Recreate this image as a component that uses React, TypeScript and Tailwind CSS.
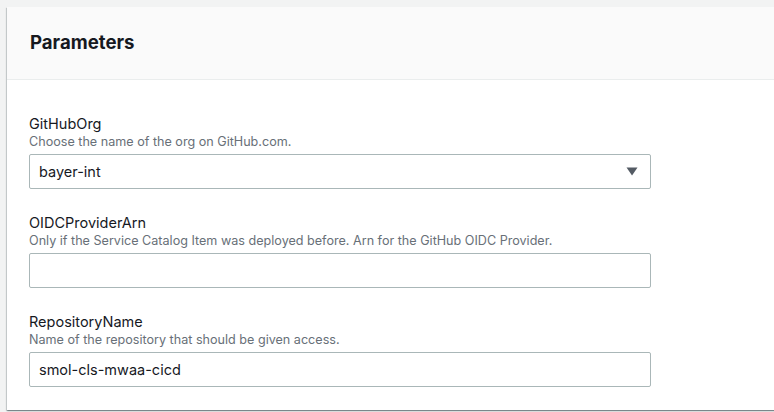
import { useState } from 'react'

type Field = {
  name: string
  description: string
  value: string
  kind: 'select' | 'text'
}

const fields: Field[] = [
  {
    name: 'GitHubOrg',
    description: 'Choose the name of the org on GitHub.com.',
    value: 'bayer-int',
    kind: 'select',
  },
  {
    name: 'OIDCProviderArn',
    description: 'Only if the Service Catalog Item was deployed before. Arn for the GitHub OIDC Provider.',
    value: '',
    kind: 'text',
  },
  {
    name: 'RepositoryName',
    description: 'Name of the repository that should be given access.',
    value: 'smol-cls-mwaa-cicd',
    kind: 'text',
  },
]

function Caret() {
  return (
    <svg width="12" height="9" viewBox="0 0 12 9" className="absolute right-[13px] top-[13px]">
      <path d="M0.5 0.5h11L6 8.5z" fill="#545b64" />
    </svg>
  )
}

function ParamField({ field }: { field: Field }) {
  const [value, setValue] = useState(field.value)

  return (
    <div className="flex flex-col">
      <label className="text-[14.5px] leading-[20px] text-[#16191f]">{field.name}</label>
      <p className="text-[12.6px] leading-[16px] text-[#687078] mb-[4px]">{field.description}</p>
      <div className="relative w-[622px]">
        {field.kind === 'select' ? (
          <div className="h-[35px] border border-[#aab7b8] rounded-[2px] bg-white pl-[9px] flex items-center text-[14.5px] text-[#16191f]">
            {value}
          </div>
        ) : (
          <input
            value={value}
            onChange={(e) => setValue(e.target.value)}
            className="w-full h-[35px] border border-[#aab7b8] rounded-[2px] bg-white px-[9px] text-[14.5px] text-[#16191f] outline-none"
          />
        )}
        {field.kind === 'select' && <Caret />}
      </div>
    </div>
  )
}

export default function App() {
  return (
    <div
      className="h-[412px] w-[774px] overflow-hidden bg-[#f2f3f3] pl-[7px] pt-[7px]"
      style={{ fontFamily: 'Inter, Roboto, sans-serif' }}
    >
      <div className="w-[800px] bg-white shadow-[0_1px_1px_0_rgba(0,28,36,0.3),1px_1px_1px_0_rgba(0,28,36,0.15),-1px_1px_1px_0_rgba(0,28,36,0.15)]">
        {/* Header */}
        <div className="h-[73px] bg-[#fafafa] border-b border-[#eaeded] px-[23px] flex items-center">
          <h2 className="text-[18.6px] font-bold text-[#16191f]">Parameters</h2>
        </div>

        {/* Body */}
        <div className="px-[22px] pt-[34px] pb-[23px] flex flex-col gap-[24px]">
          {fields.map((f) => (
            <ParamField key={f.name} field={f} />
          ))}
        </div>
      </div>
    </div>
  )
}
